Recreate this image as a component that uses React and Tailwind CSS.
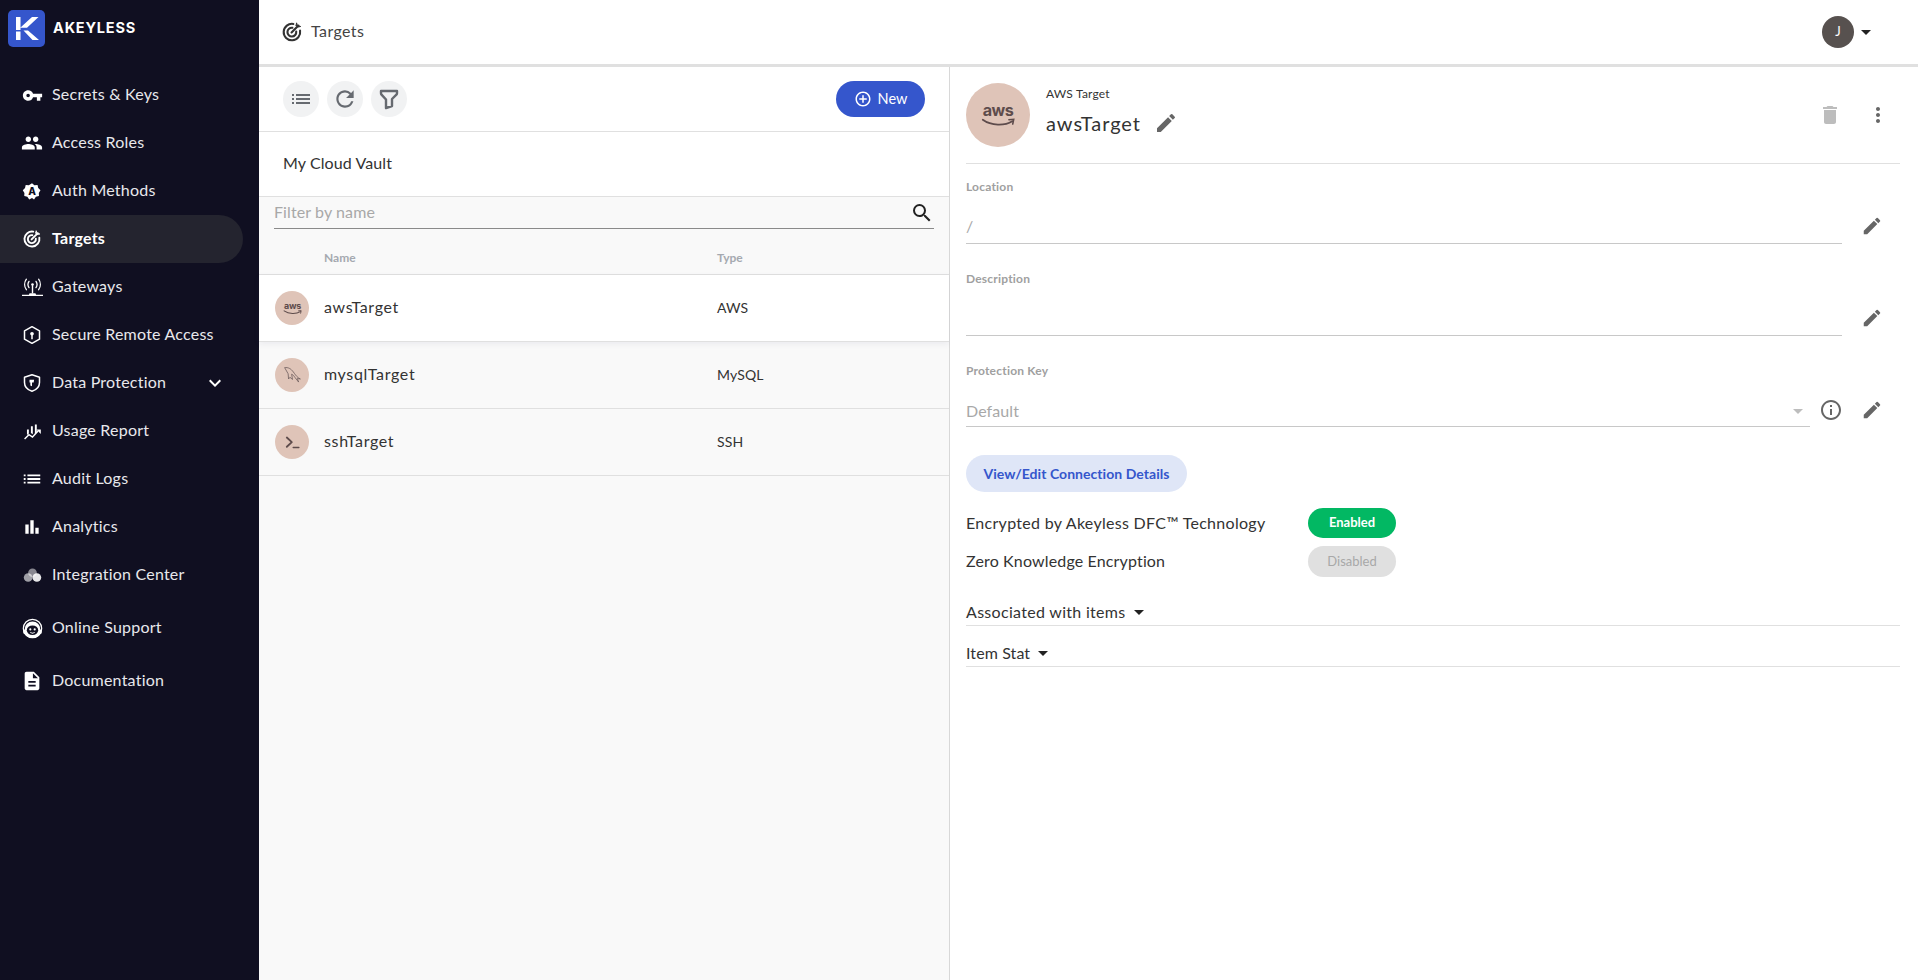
import React from "react";
import { MdVpnKey, MdPeople, MdList, MdBarChart, MdDescription, MdKeyboardArrowDown, MdRefresh, MdSearch, MdEdit, MdDelete, MdMoreVert, MdArrowDropDown, MdInfoOutline, MdAddCircleOutline } from "react-icons/md";
import { TbFilter } from "react-icons/tb";

const TargetIcon = ({ className }) => (
  <svg viewBox="0 0 24 24" className={className} fill="none" stroke="currentColor" strokeWidth="2.3" strokeLinecap="round">
    <path d="M20.8 10.5A9 9 0 1 1 13.5 3.2" />
    <path d="M16.6 11.6A4.8 4.8 0 1 1 12.4 7.4" />
    <path d="M11.5 12.5 19 5" />
    <path d="M16.5 4.8 17 2l1 3 3.5 1-3 .6-2-1.8Z" fill="currentColor" strokeWidth="1" />
  </svg>
);
const AuthIcon = ({ className }) => (
  <svg viewBox="0 0 24 24" className={className}>
    <path fill="currentColor" d="M12 1.5l3.2 2.7 4.2-.3.9 4.1 3 3-2.2 3.6.2 4.2-4.1 1-2.5 3.4L12 21.3l-3.7 1.9-2.5-3.4-4.1-1 .2-4.2L-.3 11l3-3 .9-4.1 4.2.3L12 1.5Z" transform="translate(1.2 1.2) scale(.9)" />
    <text x="12" y="16.5" textAnchor="middle" fontSize="12" fontWeight="800" fill="#100f21" fontFamily="Inter, sans-serif">A</text>
  </svg>
);
const GatewayIcon = ({ className }) => (
  <svg viewBox="0 0 24 24" className={className} fill="none" stroke="currentColor" strokeWidth="1.5" strokeLinecap="round">
    <path d="M5 2.5C2.4 6 2.4 11 5 14.5M19 2.5c2.6 3.500 2.600 8.500 0 12M8 5c-1.500 2.200-1.500 5 0 7.200M16 5c1.500 2.200 1.500 5 0 7.200" />
    <circle cx="12" cy="8.500" r="1.500" fill="currentColor" stroke="none" />
    <path d="M12 10v8M.5 21h23" strokeWidth="1.600" />
    <path d="M9.500 20h5" strokeWidth="3" />
  </svg>
);
const RemoteIcon = ({ className }) => (
  <svg viewBox="0 0 24 24" className={className} fill="none" stroke="currentColor" strokeWidth="1.800" strokeLinejoin="round">
    <path d="M12 2 21 7v10l-9 5-9-5V7l9-5Z" />
    <circle cx="12" cy="10.500" r="2.200" fill="currentColor" stroke="none" />
    <path d="M12 11v6" />
  </svg>
);
const ShieldIcon = ({ className }) => (
  <svg viewBox="0 0 24 24" className={className} fill="none" stroke="currentColor" strokeWidth="1.800" strokeLinejoin="round">
    <path d="M12 2 21 5v6.500c0 5-3.600 8.800-9 10.500-5.400-1.700-9-5.500-9-10.500V5l9-3Z" />
    <path d="M9 8h5.500L14 11.500h-2v4.500l-2-1v-3.500H9V8Z" fill="currentColor" stroke="none" />
  </svg>
);
const UsageIcon = ({ className }) => (
  <svg viewBox="0 0 24 24" className={className} fill="currentColor">
    <path d="M5 9.500h2.400v5L5 16.500v-7ZM10 5.500h2.400v10L10 14V5.500ZM15 3h2.400v10.500L15 15.500V3Z" />
    <path d="M2 21.500l5.500-5.500 4.500 3 7-7.500" fill="none" stroke="currentColor" strokeWidth="1.800" />
    <path d="M17 9.500h5.500V15L17 9.500Z" />
  </svg>
);
const IntegrationIcon = ({ className }) => (
  <svg viewBox="0 0 24 24" className={className} fill="currentColor">
    <circle cx="12" cy="8.500" r="5.500" opacity=".5" />
    <circle cx="6.500" cy="14.500" r="5.500" opacity=".6" />
    <circle cx="17.500" cy="14.500" r="5.500" opacity=".9" />
  </svg>
);
const SupportIcon = ({ className }) => (
  <svg viewBox="0 0 24 24" className={className}>
    <circle cx="12" cy="12" r="10.500" fill="none" stroke="currentColor" strokeWidth="1.400" />
    <path fill="currentColor" d="M3 13a9 9 0 0 1 18 0l1.500 1v3.500L20 19c-1.500 2.500-4.500 3.500-8 3.500S5.500 21.500 4 19l-2.500-1.500V14L3 13Z" />
    <ellipse cx="12" cy="14" rx="6.500" ry="5.500" fill="#100f21" />
    <circle cx="9.500" cy="13" r="1.200" fill="currentColor" />
    <circle cx="14.500" cy="13" r="1.200" fill="currentColor" />
    <path d="M9.500 16.500c1.500 1 3.500 1 5 0" stroke="currentColor" strokeWidth="1.200" fill="none" />
  </svg>
);
const Logo = () => (
  <svg viewBox="0 0 37 37" className="w-[37px] h-[37px] shrink-0">
    <rect width="37" height="37" rx="5" fill="#3556cc" />
    <path d="M8 7h4.500v10.500L24 7h6.500L19 17.800h-6.500V20H8V7Z" fill="#fff" />
    <path d="M8 21.500h4.500V30H8v-8.500ZM15.500 20.500H20L31 30h-6.500l-9-9.500Z" fill="#fff" />
  </svg>
);
const Aws = ({ className }) => (
  <svg viewBox="0 0 40 28" className={className} fill="none">
    <text x="20" y="15" textAnchor="middle" fontSize="17" fontWeight="700" fill="#5e4c4c" fontFamily="Inter, sans-serif" letterSpacing="-.6">aws</text>
    <path d="M4 18.500c9 6.500 23 6.500 31 1.500" stroke="#5e4c4c" strokeWidth="2" strokeLinecap="round" />
    <path d="M31.500 18.500 36.500 18 35.500 23" stroke="#5e4c4c" strokeWidth="1.700" strokeLinecap="round" />
  </svg>
);
const Mysql = ({ className }) => (
  <svg viewBox="0 0 24 24" className={className} fill="none" stroke="#6b5a5a" strokeWidth=".9" strokeLinejoin="round">
    <path d="M3 3c4-.5 7 1 10 5 1.500 2 3 4.500 5.500 6.500l2.500 1.500-3.500-.5 1.500 4-4-5c-1-1.500-2-3-4-4l1 6-3-2.500-1.500 2L7 10 3 3Z" />
  </svg>
);
const Terminal = ({ className }) => (
  <svg viewBox="0 0 24 24" className={className} fill="none" stroke="#5e4c4c" strokeLinecap="round" strokeLinejoin="round">
    <path d="M4 5l7 6.500L4 18" strokeWidth="2.600" />
    <path d="M13 19h8" strokeWidth="2" />
  </svg>
);

const nav = [
  [MdVpnKey, "Secrets & Keys", "w-[21px] h-[21px]"],
  [MdPeople, "Access Roles", "w-[22px] h-[22px]"],
  [AuthIcon, "Auth Methods", "w-[20px] h-[20px]"],
  [TargetIcon, "Targets", "w-[20px] h-[20px]", true],
  [GatewayIcon, "Gateways", "w-[21px] h-[21px]"],
  [RemoteIcon, "Secure Remote Access", "w-[20px] h-[20px]"],
  [ShieldIcon, "Data Protection", "w-[20px] h-[20px]", false, true],
  [UsageIcon, "Usage Report", "w-[19px] h-[19px]"],
  [MdList, "Audit Logs", "w-[22px] h-[22px]"],
  [MdBarChart, "Analytics", "w-[20px] h-[20px]"],
  [IntegrationIcon, "Integration Center", "w-[19px] h-[19px]"],
];

function NavRow({ Icon, label, size, active, chevron }) {
  return (
    <div className={active ? "flex items-center h-[48px] w-[243px] pl-[21px] rounded-r-[24px] bg-[#24242f] text-white font-bold" : "flex items-center h-[48px] w-[243px] pl-[21px] text-[#e8e8ec]"}>
      <span className="w-[22px] mr-[9px] flex items-center justify-center text-white"><Icon className={size} /></span>
      <span className="text-[16px] flex-1 tracking-[0.22px] pb-[3px]">{label}</span>
      {chevron && <MdKeyboardArrowDown className="w-[24px] h-[24px] mr-[16px] text-white" />}
    </div>
  );
}

function Sidebar() {
  return (
    <aside className="w-[259px] shrink-0 bg-[#100f21] flex flex-col">
      <div className="flex items-center h-[57px] pl-[8px] gap-[8px]">
        <Logo />
        <span className="text-white font-bold text-[14.5px] tracking-[0.8px] font-['Inter'] pb-[2px]">AKEYLESS</span>
      </div>
      <div className="flex flex-col mt-[14px]">
        {nav.map(([I, l, s, a, c]) => <NavRow key={l} Icon={I} label={l} size={s} active={a} chevron={c} />)}
      </div>
      <div className="flex flex-col mt-[5px] gap-[5px]">
        <NavRow Icon={SupportIcon} label="Online Support" size="w-[21px] h-[21px]" />
        <NavRow Icon={MdDescription} label="Documentation" size="w-[22px] h-[22px]" />
      </div>
    </aside>
  );
}

const RoundBtn = ({ children }) => (
  <button className="w-[36px] h-[36px] rounded-full bg-[#f1f2f3] flex items-center justify-center text-[#666a70]">{children}</button>
);

const rows = [
  [<Aws className="w-[21px] h-[15px]" />, "awsTarget", "AWS", true],
  [<Mysql className="w-[21px] h-[21px]" />, "mysqlTarget", "MySQL"],
  [<Terminal className="w-[17px] h-[17px]" />, "sshTarget", "SSH"],
];

function ListPanel() {
  return (
    <section className="w-[691px] shrink-0 flex flex-col bg-[#f9f9f9] border-r border-[#d8d8d8]">
      <div className="h-[65px] shrink-0 bg-white border-b border-[#e0e0e0] flex items-center pl-[24px] pr-[24px] gap-[8px]">
        <RoundBtn><MdList className="w-[24px] h-[24px]" /></RoundBtn>
        <RoundBtn><MdRefresh className="w-[26px] h-[26px]" /></RoundBtn>
        <RoundBtn><TbFilter className="w-[24px] h-[24px]" strokeWidth={2.4} /></RoundBtn>
        <button className="ml-auto w-[89px] h-[36px] rounded-full bg-[#3556cc] text-white flex items-center justify-center gap-[6px] text-[14.5px]">
          <MdAddCircleOutline className="w-[18px] h-[18px]" /><span>New</span>
        </button>
      </div>
      <div className="h-[65px] shrink-0 bg-white border-b border-[#e0e0e0] flex items-center pl-[24px] pb-[2px] text-[16px] tracking-[0.1px] text-[#333]">My Cloud Vault</div>
      <div className="h-[78px] shrink-0 border-b border-[#e0e0e0] flex flex-col px-[15px]">
        <div className="h-[32px] shrink-0 border-b border-[#8a8a8a] flex items-center justify-between text-[16px] text-[#a8a8a8] tracking-[0.1px]">
          <span className="pb-[2px]">Filter by name</span>
          <MdSearch className="w-[24px] h-[24px] text-[#222]" />
        </div>
        <div className="flex mt-[20px] text-[12px] font-bold text-[#a5a9b0]">
          <span className="ml-[50px] w-[393px]">Name</span><span>Type</span>
        </div>
      </div>
      {rows.map(([ic, n, t, sel]) => (
        <div key={n} className={sel ? "h-[67px] shrink-0 flex items-center border-b border-[#e0e0e0] bg-white pl-[16px] shadow-[0_2px_6px_rgba(60,70,110,0.08)]" : "h-[67px] shrink-0 flex items-center border-b border-[#e0e0e0] pl-[16px]"}>
          <span className="w-[34px] h-[34px] rounded-full bg-[#dfc4b8] flex items-center justify-center">{ic}</span>
          <span className="ml-[15px] w-[393px] text-[16px] tracking-[0.65px] text-[#333] pb-[2px]">{n}</span>
          <span className="text-[14px] tracking-[0.1px] text-[#333] pb-[2px]">{t}</span>
        </div>
      ))}
    </section>
  );
}

const Pencil = () => <MdEdit className="w-[22px] h-[22px] text-[#666]" />;

function Field({ label, value, lineClass }) {
  return (
    <div className="h-[92px] flex flex-col pt-[16px]">
      <span className="text-[12px] font-bold text-[#a0a0a0] leading-[14px] tracking-[0.2px]">{label}</span>
      <div className="flex items-start mt-[18px]">
        <div className={lineClass}>{value}</div>
      </div>
    </div>
  );
}

function Detail() {
  return (
    <section className="flex-1 min-w-0 pl-[16px] pr-[18px] bg-white flex flex-col">
      <div className="h-[97px] shrink-0 border-b border-[#e0e0e0] flex items-center">
        <span className="w-[64px] h-[64px] rounded-full bg-[#dfc4b8] flex items-center justify-center"><Aws className="w-[38px] h-[27px]" /></span>
        <div className="ml-[16px] flex flex-col">
          <span className="text-[12px] tracking-[0.2px] text-[#333] leading-[16px] mt-[-7px]">AWS Target</span>
          <div className="flex items-center mt-[7px]">
            <span className="text-[20px] tracking-[0.95px] text-[#333] leading-[28px]">awsTarget</span>
            <MdEdit className="w-[24px] h-[24px] text-[#666] ml-[13px]" />
          </div>
        </div>
        <MdDelete className="w-[24px] h-[24px] text-[#bdbdbd] ml-auto mr-[24px]" />
        <MdMoreVert className="w-[24px] h-[24px] text-[#666] mr-[10px]" />
      </div>
      <div className="flex shrink-0">
        <div className="flex-1 min-w-0">
          <Field label="Location" value="/" lineClass="w-[876px] h-[32px] border-b border-[#c8c8c8] text-[16px] text-[#a8a8a8] leading-[28px]" />
          <Field label="Description" value="" lineClass="w-[876px] h-[32px] border-b border-[#c8c8c8]" />
          <div className="pt-[16px]">
            <div className="text-[12px] font-bold text-[#a0a0a0] leading-[14px] tracking-[0.2px]">Protection Key</div>
            <div className="w-[844px] h-[32px] mt-[17px] border-b border-[#c8c8c8] flex items-center justify-between text-[16px] tracking-[0.1px] text-[#a8a8a8]">
              Default<MdArrowDropDown className="w-[24px] h-[24px] text-[#bdbdbd]" />
            </div>
          </div>
        </div>
        <div className="w-[58px] flex flex-col items-center pt-[51px] mr-[-1px]">
          <div className="h-[92px]"><Pencil /></div>
          <div className="h-[92px]"><Pencil /></div>
          <div className="relative"><Pencil /><MdInfoOutline className="absolute left-[-42px] top-[-1px] w-[24px] h-[24px] text-[#666]" /></div>
        </div>
      </div>
      <button className="mt-[28px] shrink-0 w-[221px] h-[37px] rounded-full bg-[#dfe6f7] text-[#3556cc] font-bold text-[14px] tracking-[0.05px] pb-[1px]">View/Edit Connection Details</button>
      <div className="flex items-center mt-[16px] h-[30px] shrink-0">
        <span className="w-[342px] text-[16px] tracking-[0.3px] text-[#333] pb-[1px]">Encrypted by Akeyless DFC™ Technology</span>
        <span className="w-[88px] h-[30px] rounded-full bg-[#02b863] text-white font-bold text-[13px] flex items-center justify-center">Enabled</span>
      </div>
      <div className="flex items-center mt-[8px] h-[31px] shrink-0">
        <span className="w-[342px] text-[16px] tracking-[0.15px] text-[#333] pb-[1px]">Zero Knowledge Encryption</span>
        <span className="w-[88px] h-[31px] rounded-full bg-[#e0e0e0] text-[#a8a8a8] text-[13px] flex items-center justify-center">Disabled</span>
      </div>
      <div className="mt-[17px] h-[32px] shrink-0 border-b border-[#e0e0e0] flex items-center pt-[4px] text-[16px] tracking-[0.3px] text-[#333]">Associated with items<MdArrowDropDown className="w-[24px] h-[24px] text-[#222] ml-[1px]" /></div>
      <div className="mt-[9px] h-[32px] shrink-0 border-b border-[#e0e0e0] flex items-center pt-[4px] text-[16px] tracking-[0.1px] text-[#333]">Item Stat<MdArrowDropDown className="w-[24px] h-[24px] text-[#222] ml-[1px]" /></div>
    </section>
  );
}

export default function App() {
  return (
    <div className="flex w-[1918px] h-[980px] overflow-hidden font-['Lato','Noto_Sans',sans-serif] bg-white">
      <Sidebar />
      <div className="flex-1 min-w-0 flex flex-col">
        <header className="h-[67px] shrink-0 border-b-[3px] border-[#e0e0e0] bg-white flex items-center pl-[22px]">
          <TargetIcon className="w-[22px] h-[22px] text-[#333]" />
          <span className="ml-[8px] text-[16px] tracking-[0.4px] text-[#444] pb-[2px]">Targets</span>
          <div className="ml-auto flex items-center mr-[40px]">
            <span className="w-[32px] h-[32px] rounded-full bg-[#57514f] text-white text-[13px] flex items-center justify-center">J</span>
            <MdArrowDropDown className="w-[24px] h-[24px] text-[#222]" />
          </div>
        </header>
        <div className="flex-1 flex min-h-0">
          <ListPanel />
          <Detail />
        </div>
      </div>
    </div>
  );
}
